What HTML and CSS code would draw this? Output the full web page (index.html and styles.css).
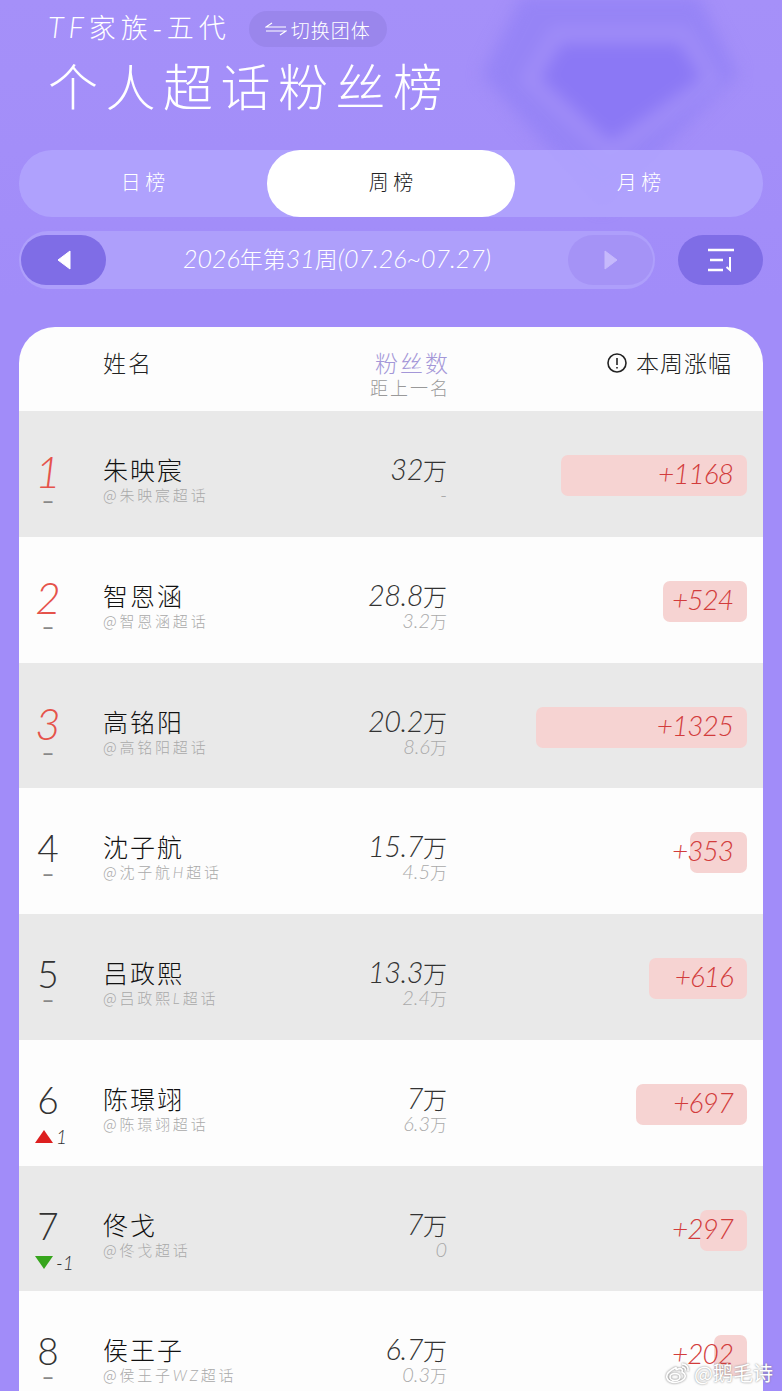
FILE: index.html
```html
<!DOCTYPE html>
<html lang="zh-CN">
<head>
    <meta charset="UTF-8">
    <title>个人超话粉丝榜</title>
    <link rel="stylesheet" href="styles.css">
</head>
<body>
    <div class="page">
        <svg class="gem" viewBox="0 0 300 240" width="300" height="240">
            <path class="gem-outer" d="M60 6 H236 L276 85 L140 218 L20 85 Z"/>
            <path class="gem-inner" d="M95 45 H222 L250 90 L148 162 L68 90 Z"/>
        </svg>

        <div class="top">
            <div class="top-row">
                <span class="family"><i>TF</i>家族-五代</span>
                <span class="switch">
                    <svg width="22" height="14" viewBox="0 0 22 14"><path d="M7 1 L1 5 H21 M1 9 H21 L15 13" fill="none" stroke="#fff" stroke-width="1.2"/></svg>
                    切换团体
                </span>
            </div>
            <h1 class="title">个人超话粉丝榜</h1>
        </div>

        <div class="tabs">
            <div class="tab">日 榜</div>
            <div class="tab active">周 榜</div>
            <div class="tab">月 榜</div>
        </div>

        <div class="pager-row">
            <div class="pager">
                <div class="nav-btn">
                    <svg width="14" height="20" viewBox="0 0 14 20"><path d="M13 1 V19 L1 10 Z" fill="#fff" stroke="#fff" stroke-linejoin="round"/></svg>
                </div>
                <div class="week"><i>2026</i>年第<i>31</i>周<i>(07.26~07.27)</i></div>
                <div class="nav-btn disabled">
                    <svg width="14" height="20" viewBox="0 0 14 20"><path d="M1 1 V19 L13 10 Z" fill="#c6b9fc" stroke="#c6b9fc" stroke-linejoin="round"/></svg>
                </div>
            </div>
            <div class="sort-btn">
                <svg width="28" height="24" viewBox="0 0 28 24" fill="none" stroke="#fff" stroke-width="2.4">
                    <path d="M1 2 H27 M3 12 H16 M1 22 H16"/>
                    <path d="M23 9 V22 L19.500 19" stroke-width="2"/>
                </svg>
            </div>
        </div>

        <div class="board">
            <div class="board-head">
                <div class="head-name">姓名</div>
                <div class="head-fans">
                    <div class="head-fans-main">粉丝数</div>
                    <div class="head-fans-sub">距上一名</div>
                </div>
                <div class="head-rise">
                    <svg width="22" height="22" viewBox="0 0 22 22"><circle cx="11" cy="11" r="9" fill="none" stroke="#222" stroke-width="1.6"/><path d="M11 6 V13 M11 15 V16.6" stroke="#222" stroke-width="1.6"/></svg>
                    本周涨幅
                </div>
            </div>

            <div class="row">
                <div class="rank top3"><span class="rank-num">1</span><span class="delta">–</span></div>
                <div class="who"><div class="name">朱映宸</div><div class="handle">@朱映宸超话</div></div>
                <div class="fans"><div class="fans-num"><i>32</i>万</div><div class="fans-gap"><i>-</i></div></div>
                <div class="rise"><div class="bar" style="width: 186px"><i>+1168</i></div></div>
            </div>
            <div class="row">
                <div class="rank top3"><span class="rank-num">2</span><span class="delta">–</span></div>
                <div class="who"><div class="name">智恩涵</div><div class="handle">@智恩涵超话</div></div>
                <div class="fans"><div class="fans-num"><i>28.8</i>万</div><div class="fans-gap"><i>3.2</i>万</div></div>
                <div class="rise"><div class="bar" style="width: 84px"><i>+524</i></div></div>
            </div>
            <div class="row">
                <div class="rank top3"><span class="rank-num">3</span><span class="delta">–</span></div>
                <div class="who"><div class="name">高铭阳</div><div class="handle">@高铭阳超话</div></div>
                <div class="fans"><div class="fans-num"><i>20.2</i>万</div><div class="fans-gap"><i>8.6</i>万</div></div>
                <div class="rise"><div class="bar" style="width: 211px"><i>+1325</i></div></div>
            </div>
            <div class="row">
                <div class="rank"><span class="rank-num">4</span><span class="delta">–</span></div>
                <div class="who"><div class="name">沈子航</div><div class="handle">@沈子航<i>H</i>超话</div></div>
                <div class="fans"><div class="fans-num"><i>15.7</i>万</div><div class="fans-gap"><i>4.5</i>万</div></div>
                <div class="rise"><div class="bar" style="width: 57px"><i>+353</i></div></div>
            </div>
            <div class="row">
                <div class="rank"><span class="rank-num">5</span><span class="delta">–</span></div>
                <div class="who"><div class="name">吕政熙</div><div class="handle">@吕政熙<i>L</i>超话</div></div>
                <div class="fans"><div class="fans-num"><i>13.3</i>万</div><div class="fans-gap"><i>2.4</i>万</div></div>
                <div class="rise"><div class="bar" style="width: 98px"><i>+616</i></div></div>
            </div>
            <div class="row">
                <div class="rank"><span class="rank-num">6</span><span class="move"><b class="arrow-up"></b><i>1</i></span></div>
                <div class="who"><div class="name">陈璟翊</div><div class="handle">@陈璟翊超话</div></div>
                <div class="fans"><div class="fans-num"><i>7</i>万</div><div class="fans-gap"><i>6.3</i>万</div></div>
                <div class="rise"><div class="bar" style="width: 111px"><i>+697</i></div></div>
            </div>
            <div class="row">
                <div class="rank"><span class="rank-num">7</span><span class="move"><b class="arrow-down"></b><i>-1</i></span></div>
                <div class="who"><div class="name">佟戈</div><div class="handle">@佟戈超话</div></div>
                <div class="fans"><div class="fans-num"><i>7</i>万</div><div class="fans-gap"><i>0</i></div></div>
                <div class="rise"><div class="bar" style="width: 47px"><i>+297</i></div></div>
            </div>
            <div class="row">
                <div class="rank"><span class="rank-num">8</span><span class="delta">–</span></div>
                <div class="who"><div class="name">侯王子</div><div class="handle">@侯王子<i>WZ</i>超话</div></div>
                <div class="fans"><div class="fans-num"><i>6.7</i>万</div><div class="fans-gap"><i>0.3</i>万</div></div>
                <div class="rise"><div class="bar" style="width: 33px"><i>+202</i></div></div>
            </div>
        </div>

        <div class="watermark">
            <svg width="26" height="24" viewBox="0 0 26 24" fill="none" stroke="#fff" stroke-width="1.6">
                <path d="M10 7 C4 10 1 14 2 17 C3 21 9 22 13 21 C18 20 21 17 20 14 C19.500 12 18 12 17 11 C18 8 16 7 13 8 C12 8.500 11 9 11 8 C11.500 6.500 11 6 10 7 Z"/>
                <ellipse cx="10" cy="16" rx="5" ry="3.500"/>
                <path d="M17 3 C21 3 24 6 23 10 M17 6 C19 6 21 7.500 20.500 9.500"/>
            </svg>
            <span>@鹅毛诗</span>
        </div>
    </div>
</body>
</html>
```

FILE: styles.css
```css
* {
    margin: 0;
    padding: 0;
    box-sizing: border-box;
}

body {
    font-family: "Noto Sans CJK SC", "Noto Sans", sans-serif;
    font-weight: 300;
    background: #a28df9;
}

i {
    font-family: "Lato", "Noto Sans", sans-serif;
    font-style: italic;
    font-weight: 300;
}

.page {
    position: relative;
    width: 782px;
    height: 1391px;
    overflow: hidden;
    padding-top: 11px;
    background: linear-gradient(180deg, #a590f9 0%, #a18cf9 300px);
}

.gem {
    position: absolute;
    left: 462px;
    top: -10px;
    filter: blur(8px);
}

.gem-outer {
    fill: #9684f6;
}

.gem-inner {
    fill: #8b78f5;
    stroke: #a08df8;
    stroke-width: 16;
}

.top {
    position: relative;
    padding-left: 48px;
    color: #fff;
}

.top-row {
    display: flex;
    align-items: center;
    gap: 18px;
    height: 36px;
}

.family {
    margin-top: -4px;
    font-size: 27px;
    line-height: 36px;
    letter-spacing: 5px;
}

.family i {
    font-size: 29px;
}

.switch {
    display: flex;
    align-items: center;
    gap: 4px;
    height: 36px;
    padding: 0 16px;
    border-radius: 18px;
    background: #9a86ec;
    font-size: 19px;
    letter-spacing: 1px;
}

.title {
    margin-top: 7px;
    font-size: 50px;
    line-height: 60px;
    font-weight: 300;
    letter-spacing: 7.5px;
}

.tabs {
    position: relative;
    display: flex;
    height: 67px;
    margin: 36px 19px 0 19px;
    border-radius: 33px;
    background: rgba(178, 164, 254, 0.85);
}

.tab {
    flex: 1;
    display: flex;
    align-items: center;
    justify-content: center;
    padding-bottom: 5px;
    border-radius: 33px;
    color: #fff;
    font-size: 20px;
}

.tab.active {
    background: #fff;
    color: #222;
}

.pager-row {
    position: relative;
    display: flex;
    align-items: center;
    gap: 23px;
    margin: 14px 19px 0 19px;
}

.pager {
    flex: 1;
    display: flex;
    align-items: center;
    height: 58px;
    padding: 4px 2px;
    border-radius: 29px;
    background: #ae9ffb;
}

.nav-btn {
    display: flex;
    align-items: center;
    justify-content: center;
    width: 85px;
    height: 50px;
    border-radius: 25px;
    background: #7f6de6;
}

.nav-btn.disabled {
    background: #a593f6;
}

.week {
    flex: 1;
    padding-bottom: 4px;
    text-align: center;
    color: #fff;
    font-size: 23px;
    white-space: nowrap;
}

.week i {
    font-size: 25px;
}

.sort-btn {
    display: flex;
    align-items: center;
    justify-content: center;
    width: 85px;
    height: 50px;
    border-radius: 25px;
    background: #7f6de6;
}

.board {
    position: relative;
    margin: 38px 19px 0 19px;
    border-radius: 36px 36px 0 0;
    overflow: hidden;
    background: #fdfdfd;
}

.board-head {
    display: flex;
    height: 84px;
    padding-top: 18px;
}

.head-name {
    width: 284px;
    padding-left: 84px;
    font-size: 23px;
    line-height: 34px;
    letter-spacing: 2px;
    color: #222;
}

.head-fans {
    width: 147px;
    text-align: right;
}

.head-fans-main {
    font-size: 23px;
    line-height: 34px;
    letter-spacing: 2px;
    color: #a497d8;
}

.head-fans-sub {
    margin-top: -3px;
    font-size: 18px;
    line-height: 22px;
    letter-spacing: 2px;
    color: #999;
}

.head-rise {
    flex: 1;
    display: flex;
    align-items: flex-start;
    justify-content: flex-end;
    gap: 8px;
    padding-right: 31px;
    font-size: 23px;
    line-height: 34px;
    letter-spacing: 1px;
    color: #222;
}

.head-rise svg {
    margin-top: 7px;
}

.row {
    display: grid;
    grid-template-columns: 58px 26px 200px 144px 1fr;
    align-items: start;
    height: 125.75px;
    background: #fdfdfd;
}

.row:nth-child(even) {
    background: #e9e9e9;
}

.rank {
    grid-column: 1;
    display: flex;
    flex-direction: column;
    align-items: center;
    padding-top: 42px;
    color: #333;
}

.rank-num {
    height: 36px;
    font-family: "Lato", "Noto Sans", sans-serif;
    font-weight: 300;
    font-size: 37px;
    line-height: 36px;
}

.rank.top3 .rank-num {
    color: #e5534b;
    font-style: italic;
    font-size: 44px;
}

.delta {
    height: 16px;
    font-family: "Liberation Sans", sans-serif;
    font-size: 18px;
    line-height: 16px;
    font-weight: 700;
    color: #888;
}

.rank.top3 .delta {
    margin-top: 4px;
}

.move {
    display: flex;
    align-items: center;
    gap: 3px;
    align-self: flex-start;
    height: 24px;
    margin-top: 7px;
    margin-left: 16px;
    font-size: 19px;
    white-space: nowrap;
}

.arrow-up,
.arrow-down {
    display: block;
    width: 0;
    height: 0;
    border-left: 9px solid transparent;
    border-right: 9px solid transparent;
}

.arrow-up {
    border-bottom: 13px solid #dd1f1f;
}

.arrow-down {
    border-top: 13px solid #36a51c;
}

.who {
    grid-column: 3;
    padding-top: 41px;
}

.name {
    font-size: 25px;
    line-height: 34px;
    letter-spacing: 2px;
    color: #111;
}

.handle {
    margin-top: -1px;
    font-size: 15px;
    line-height: 20px;
    letter-spacing: 2.8px;
    color: #aaa;
}

.fans {
    grid-column: 4;
    padding-top: 41px;
    text-align: right;
}

.fans-num {
    font-size: 24px;
    line-height: 34px;
    color: #333;
}

.fans-num i {
    font-size: 29px;
    letter-spacing: -0.5px;
}

.fans-gap {
    height: 20px;
    margin-top: -3px;
    font-size: 17px;
    line-height: 20px;
    color: #aaa;
}

.fans-gap i {
    font-size: 20px;
}

.rise {
    grid-column: 5;
    display: flex;
    justify-content: flex-end;
    margin-top: 44px;
    padding-right: 16px;
}

/* text sticks out to the left when the bar is short */
.bar {
    display: flex;
    align-items: center;
    justify-content: flex-end;
    height: 41px;
    padding: 0 14px 5px 0;
    border-radius: 7px;
    background: #f6d3d2;
    color: #d23c3c;
    font-size: 28px;
    letter-spacing: -1px;
    white-space: nowrap;
}

.watermark {
    position: absolute;
    right: 9px;
    bottom: 4px;
    display: flex;
    align-items: center;
    gap: 3px;
    color: #fff;
    font-size: 20px;
    font-weight: 400;
    text-shadow: 0 0 2px #777;
}

.watermark svg {
    filter: drop-shadow(0 0 1px #777);
}
```
